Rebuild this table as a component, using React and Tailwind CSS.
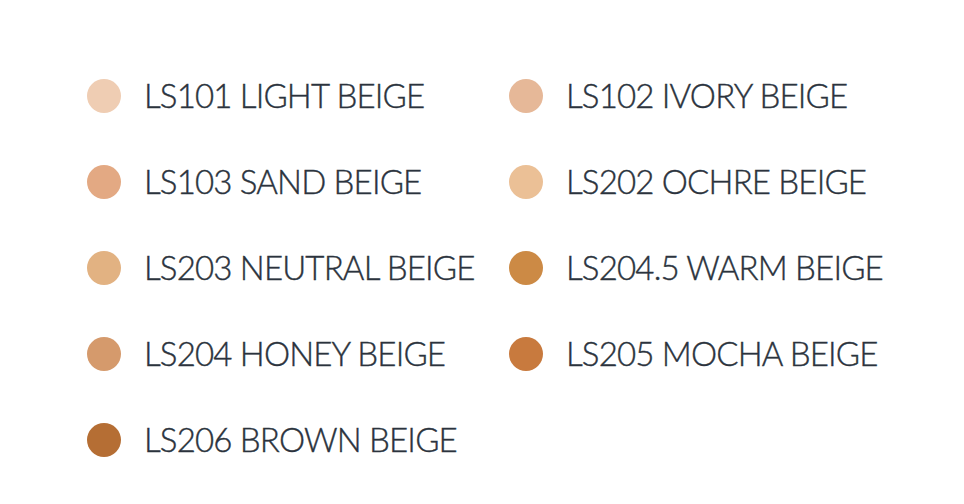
import React from 'react';

const shades = [
  { code: 'LS101', name: 'LIGHT BEIGE', color: '#efcdb3' },
  { code: 'LS102', name: 'IVORY BEIGE', color: '#e6b898' },
  { code: 'LS103', name: 'SAND BEIGE', color: '#e3a983' },
  { code: 'LS202', name: 'OCHRE BEIGE', color: '#ebc096' },
  { code: 'LS203', name: 'NEUTRAL BEIGE', color: '#e2b282' },
  { code: 'LS204.5', name: 'WARM BEIGE', color: '#cc8a45' },
  { code: 'LS204', name: 'HONEY BEIGE', color: '#d59a6c' },
  { code: 'LS205', name: 'MOCHA BEIGE', color: '#c87a3e' },
  { code: 'LS206', name: 'BROWN BEIGE', color: '#b56e34' },
];

const Swatch = ({ shade }) => (
  <div className="flex h-[86px] items-center">
    <span
      className="h-[34px] w-[34px] shrink-0 rounded-full"
      style={{ backgroundColor: shade.color }}
    />
    <span className="ml-[23px] -mt-[2px] whitespace-nowrap text-[33px] font-light leading-none tracking-[-0.025em] text-[#2b333d] [-webkit-text-stroke:0.4px_#2b333d]">
      {shade.code} {shade.name}
    </span>
  </div>
);

export default function App() {
  return (
    <div className="h-[504px] w-[964px] bg-white pl-[87px] pt-[53px] font-['Lato','Liberation_Sans',sans-serif]">
      <div className="grid grid-cols-[422px_auto]">
        {shades.map((s) => (
          <Swatch key={s.code} shade={s} />
        ))}
      </div>
    </div>
  );
}
